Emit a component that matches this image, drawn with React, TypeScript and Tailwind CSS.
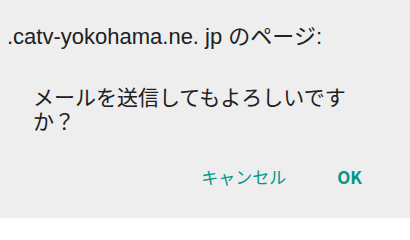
import React from "react";

export default function App() {
  return (
    <div className="w-[410px] h-[218px] bg-[#eeeeee] flex flex-col overflow-hidden font-['Liberation_Sans','Noto_Sans_CJK_JP',sans-serif]">
      <div className="pt-[25px] pl-[7px] text-[22px] leading-[24px] text-[#202020] whitespace-nowrap">
        .catv-yokohama.ne. jp のページ:
      </div>
      <div className="mt-[35px] pl-[33px] w-[370px] text-[21px] leading-[24px] text-[#202020] font-['Noto_Sans_CJK_JP',sans-serif]">
        メールを送信してもよろしいですか？
      </div>
      <div className="mt-[35px] flex justify-end items-center pr-[48px] gap-[51px] text-[17px] leading-[20px] text-[#009688] font-['Noto_Sans_CJK_JP',sans-serif]">
        <span>キャンセル</span>
        <span className="font-bold">OK</span>
      </div>
    </div>
  );
}
